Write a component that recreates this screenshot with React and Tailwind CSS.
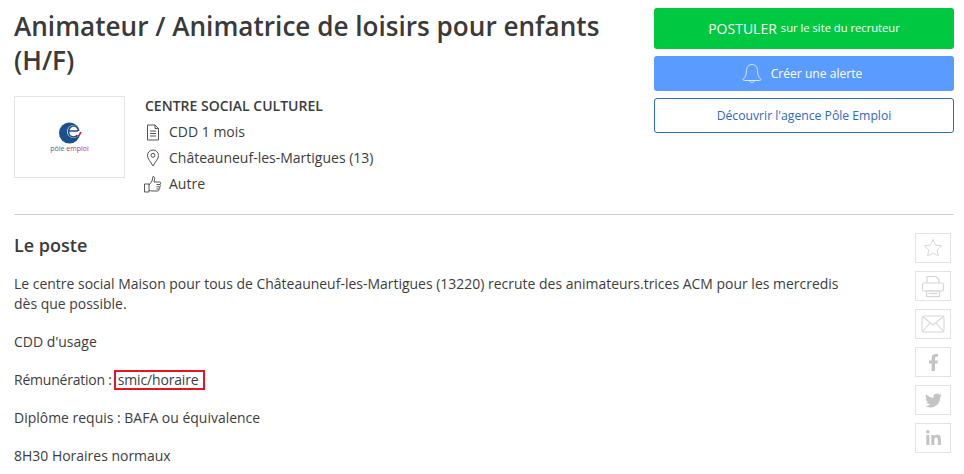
import { FaFacebookF, FaLinkedinIn, FaTwitter } from 'react-icons/fa'

function StarIcon() {
  return (
    <svg width="20" height="20" viewBox="0 0 20 20" fill="none" stroke="#d6d6d6" strokeWidth="1">
      <path d="M10 1.500l2.600 5.600 6 .7-4.400 4.100 1.200 6L10 15l-5.400 2.900 1.200-6L1.400 7.800l6-.7z" />
    </svg>
  )
}

function PrinterIcon() {
  return (
    <svg width="24" height="24" viewBox="0 0 24 24" fill="none" stroke="#d6d6d6" strokeWidth="1.200">
      <path d="M6 9V2.500h9l3 3V9" />
      <rect x="1.500" y="9" width="21" height="8" rx="1.500" />
      <rect x="5.500" y="17" width="13" height="5.500" />
      <path d="M7.500 19.500h9" />
    </svg>
  )
}

function MailIcon() {
  return (
    <svg width="24" height="18" viewBox="0 0 24 18" fill="none" stroke="#d6d6d6" strokeWidth="1.100">
      <rect x="1" y="1" width="22" height="16" rx="1.500" />
      <path d="M1.500 1.500L12 10l10.500-8.500M1.500 16.500L9 8M22.500 16.500L15 8" />
    </svg>
  )
}

function DocIcon() {
  return (
    <svg width="14" height="17" viewBox="0 0 14 17" fill="none" stroke="#555" strokeWidth="1">
      <path d="M1.500 1h7.500l3.500 3.500V16h-11z" />
      <path d="M9 1v3.500h3.500M4 7h6M4 9.500h6M4 12h6" />
    </svg>
  )
}

function PinIcon() {
  return (
    <svg width="14" height="18" viewBox="0 0 14 18" fill="none" stroke="#555" strokeWidth="1">
      <path d="M7 17C4.500 12.500 1.500 9.800 1.500 6.500a5.500 5.500 0 0 1 11 0C12.500 9.800 9.500 12.500 7 17z" />
      <circle cx="7" cy="6.300" r="2" />
    </svg>
  )
}

function ThumbIcon() {
  return (
    <svg width="18" height="18" viewBox="0 0 18 18" fill="none" stroke="#555" strokeWidth="1">
      <path d="M.5 9h4.500v8H.5zM5 10l3-4 1-4.500c1.500 0 2 1.500 1.500 3L10 7h5.500c1.500 0 1.500 2 .5 2.500.8.800.5 2-.3 2.300.5 1 0 2-.7 2.200.3 1.200-.3 2-1.500 2H8c-1.300 0-2-.5-3-1" />
      <path d="M12.500 9.500H16M12.500 11.800h3.200M12.500 14H15" />
    </svg>
  )
}

function BellIcon() {
  return (
    <svg width="20" height="22" viewBox="0 0 20 22" fill="none" stroke="#dbe8ff" strokeWidth="1">
      <path d="M10 1.500c-3.500 0-5.500 2.700-5.500 6 0 4.500-1.200 6.500-3.500 9 .3 1 1 1 2 1h14c1 0 1.700 0 2-1-2.300-2.500-3.500-4.500-3.500-9 0-3.300-2-6-5.500-6z" />
      <path d="M8 18c0 2 4 2 4 0" />
    </svg>
  )
}

function PoleEmploiLogo() {
  return (
    <div className="flex flex-col items-center">
      <svg width="24" height="22" viewBox="0 0 24 22">
        <circle cx="11.500" cy="11" r="10.500" fill="#1c4f8c" />
        <circle cx="15.500" cy="9.500" r="6.500" fill="#ffffff" />
        <path d="M11 9h9M20.500 9c-.3-3-2.500-5-5-5s-5 2.300-5 5.500 2.300 5.500 5 5.500c1.700 0 3-.6 4-1.800" fill="none" stroke="#1c4f8c" strokeWidth="1.700" />
        <path d="M20 14c1.500-1 2.500-2.500 3-4" fill="none" stroke="#c8203f" strokeWidth="1.500" />
      </svg>
      <div className="text-[7px] leading-[9px] whitespace-nowrap">
        <span className="text-[#4a6490]">pôle </span>
        <span className="text-[#b8385a]">emploi</span>
      </div>
    </div>
  )
}

function MetaRow({ icon, children }) {
  return (
    <div className="flex h-[26px] items-center text-sm text-[#3d3d3d]">
      <span className="mr-[7px] -ml-px flex w-[18px] justify-center">{icon}</span>
      {children}
    </div>
  )
}

function ShareBox({ children }) {
  return (
    <div className="flex h-[30px] w-9 items-center justify-center border border-[#e3e3e3] text-[#c4c4c4]">
      {children}
    </div>
  )
}

export default function App() {
  return (
    <div
      className="h-[474px] w-[964px] overflow-hidden bg-white px-[10px] pl-[14px] text-[#3d3d3d]"
      style={{ fontFamily: '"Open Sans", sans-serif' }}
    >
      <div className="flex h-[214px] justify-between">
        <div className="w-[620px] pt-[9px]">
          <h1 className="text-[26.130px] leading-[34px] font-semibold text-[#3a3a3a]">
            Animateur / Animatrice de loisirs pour enfants (H/F)
          </h1>
          <div className="mt-[19px] flex">
            <div className="flex h-[82px] w-[111px] items-center justify-center border border-[#e3e3e3]">
              <PoleEmploiLogo />
            </div>
            <div className="-mt-[3px] ml-[20px]">
              <div className="flex h-[26px] items-center text-sm font-semibold text-[#3d3d3d]">CENTRE SOCIAL CULTUREL</div>
              <MetaRow icon={<DocIcon />}>CDD 1 mois</MetaRow>
              <MetaRow icon={<PinIcon />}>Châteauneuf-les-Martigues (13)</MetaRow>
              <MetaRow icon={<ThumbIcon />}>Autre</MetaRow>
            </div>
          </div>
        </div>

        <div className="flex w-[300px] flex-col pt-2">
          <button className="flex h-[41px] items-center justify-center rounded-[3px] bg-[#00c941] text-white">
            <span className="text-sm">POSTULER</span>
            <span className="ml-1 text-[11.200px]">sur le site du recruteur</span>
          </button>
          <button className="mt-[7px] flex h-[35px] items-center justify-center rounded-[3px] bg-[#5a9bff] pt-px pr-1 text-[12.100px] text-white">
            <BellIcon />
            <span className="ml-[9px]">Créer une alerte</span>
          </button>
          <button className="mt-[7px] h-[35px] rounded-[3px] border border-[#2f68c8] bg-white pt-px text-[12.200px] text-[#2f68c8]">
            Découvrir l'agence Pôle Emploi
          </button>
        </div>
      </div>

      <div className="border-t border-[#cfcfcf]" />

      <div className="flex justify-between">
        <div className="w-[830px]">
          <h2 className="mt-[18px] text-[18px] leading-6 font-semibold text-[#3a3a3a]">Le poste</h2>
          <div className="mt-[17px] text-[13.970px] leading-5 text-[#3d3d3d]">
            <p>
              Le centre social Maison pour tous de Châteauneuf-les-Martigues (13220) recrute des animateurs.trices ACM pour les mercredis dès que possible.
            </p>
            <p className="mt-[18px]">CDD d'usage</p>
            <p className="mt-[18px]">
              <span className="tracking-[-0.2px]">Rémunération :</span>
              <span className="ml-[2px] inline-block h-5 border-2 border-[#e8141f] pr-[5px] pl-[2px] leading-4 tracking-[-0.15px]">smic/horaire</span>
            </p>
            <p className="mt-[18px]">Diplôme requis : BAFA ou équivalence</p>
            <p className="mt-[18px]">8H30 Horaires normaux</p>
          </div>
        </div>
        <div className="mt-[18px] mr-[3px] flex flex-col gap-2">
          <ShareBox><StarIcon /></ShareBox>
          <ShareBox><PrinterIcon /></ShareBox>
          <ShareBox><MailIcon /></ShareBox>
          <ShareBox><FaFacebookF size={17} /></ShareBox>
          <ShareBox><FaTwitter size={17} /></ShareBox>
          <ShareBox><FaLinkedinIn size={17} /></ShareBox>
        </div>
      </div>
    </div>
  )
}
